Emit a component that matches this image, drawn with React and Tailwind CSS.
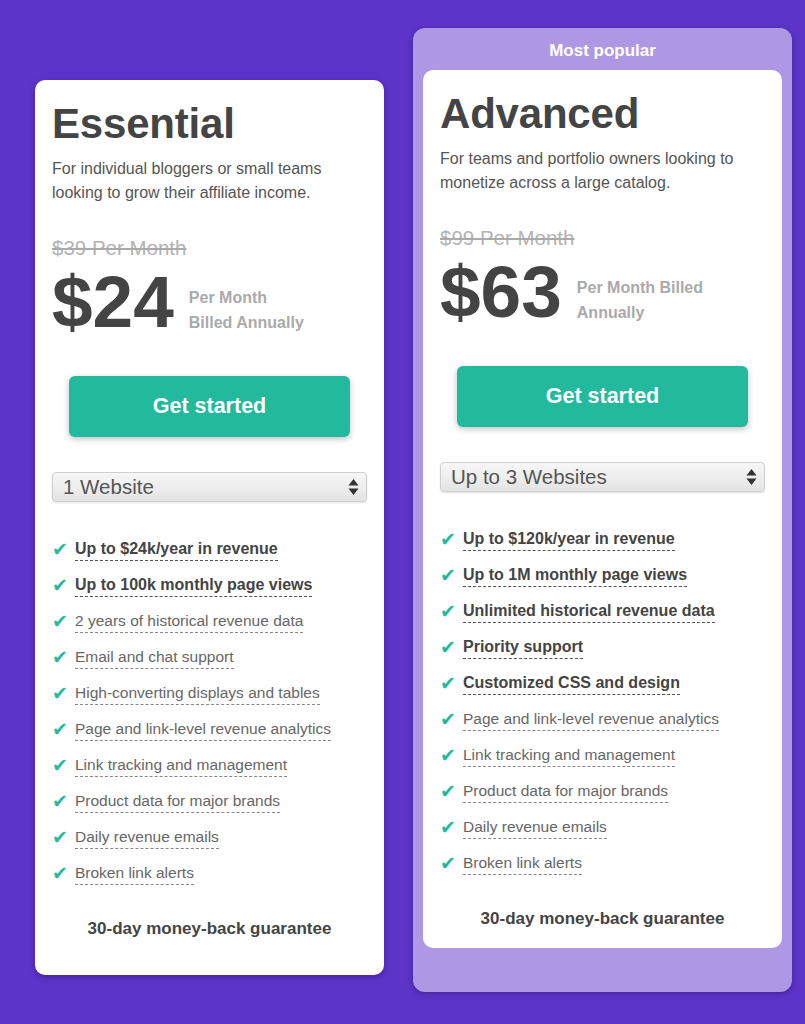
import { useState } from 'react';

const plans = [
  {
    name: 'Essential',
    desc: ['For individual bloggers or small teams', 'looking to grow their affiliate income.'],
    was: '$39 Per Month',
    price: '$24',
    note: ['Per Month', 'Billed Annually'],
    sites: '1 Website',
    features: [
      ['Up to $24k/year in revenue', true],
      ['Up to 100k monthly page views', true],
      ['2 years of historical revenue data', false],
      ['Email and chat support', false],
      ['High-converting displays and tables', false],
      ['Page and link-level revenue analytics', false],
      ['Link tracking and management', false],
      ['Product data for major brands', false],
      ['Daily revenue emails', false],
      ['Broken link alerts', false],
    ],
  },
  {
    name: 'Advanced',
    desc: ['For teams and portfolio owners looking to', 'monetize across a large catalog.'],
    was: '$99 Per Month',
    price: '$63',
    note: ['Per Month Billed', 'Annually'],
    sites: 'Up to 3 Websites',
    features: [
      ['Up to $120k/year in revenue', true],
      ['Up to 1M monthly page views', true],
      ['Unlimited historical revenue data', true],
      ['Priority support', true],
      ['Customized CSS and design', true],
      ['Page and link-level revenue analytics', false],
      ['Link tracking and management', false],
      ['Product data for major brands', false],
      ['Daily revenue emails', false],
      ['Broken link alerts', false],
    ],
  },
];

function SelectArrows() {
  return (
    <svg width="11" height="18" viewBox="0 0 11 18" className="shrink-0">
      <path d="M5.5 1 L10.5 7.5 H0.5 Z" fill="#333" />
      <path d="M5.5 17 L10.5 10.5 H0.5 Z" fill="#333" />
    </svg>
  );
}

function PlanCard({ plan, className }) {
  const [sites] = useState(plan.sites);

  return (
    <div className={`bg-white rounded-[10px] px-[17px] pt-[19px] ${className}`}>
      <h2 className="text-[42px] leading-[50px] font-bold text-[#444] tracking-[-0.2px]">{plan.name}</h2>
      <p className="mt-2 text-[16px] leading-[24px] text-[#555]">
        {plan.desc[0]}
        <br />
        {plan.desc[1]}
      </p>
      <div className="mt-[31px] text-[20.5px] leading-[24px] text-[#b3b3b3] line-through decoration-[#aaa]">{plan.was}</div>
      <div className="mt-[6px] flex items-start">
        <span className="text-[73px] leading-[72px] font-bold text-[#444]">{plan.price}</span>
        <span className="ml-[15px] mt-[19px] text-[16px] leading-[25px] font-bold text-[#aaa]">
          {plan.note[0]}
          <br />
          {plan.note[1]}
        </span>
      </div>
      <button className="mt-[38px] mx-[17px] w-[calc(100%-34px)] h-[61px] rounded-[6px] bg-[#22b99d] text-white text-[21.5px] font-bold shadow-[0_2px_6px_rgba(0,0,0,0.25)]">
        Get started
      </button>
      <div className="mt-[35px] h-[30px] flex items-center justify-between pl-[10px] pr-[7px] rounded-[4px] border border-[#cfcfcf] bg-linear-to-b from-[#f7f7f7] via-[#eeeeee] to-[#e3e3e3] shadow-[0_1px_2px_rgba(0,0,0,0.12)]">
        <span className="text-[20.5px] leading-none text-[#555]">{sites}</span>
        <SelectArrows />
      </div>
      <ul className="mt-[29px]">
        {plan.features.map(([text, bold]) => (
          <li key={text} className="h-[36px] flex items-center">
            <span className="w-[23px] text-[19px] text-[#22b99d] font-['DejaVu_Sans',sans-serif] leading-none">✔</span>
            <span
              className={`mt-[2px] leading-[18px] pb-[2px] border-b border-dashed ${
                bold ? 'text-[16px] font-bold text-[#444] border-[#555]' : 'text-[15.5px] text-[#666] border-[#888]'
              }`}
            >
              {text}
            </span>
          </li>
        ))}
      </ul>
      <div className="mt-[26px] text-center text-[17px] leading-[24px] font-bold text-[#444]">30-day money-back guarantee</div>
    </div>
  );
}

export default function App() {
  return (
    <div className="min-h-[1024px] bg-[#5c35c8] font-['Liberation_Sans',Arial,sans-serif] flex items-start pl-[35px] gap-[29px]">
      <PlanCard plan={plans[0]} className="mt-[80px] w-[349px] h-[895px] shadow-[0_2px_6px_rgba(40,10,120,0.45)]" />
      <div className="mt-[28px] w-[379px] h-[964px] rounded-[12px] bg-[#af98e3] px-[10px] shadow-[0_2px_6px_rgba(40,10,120,0.45)]">
        <div className="h-[42px] pt-[3px] flex items-center justify-center text-white font-bold text-[17px]">Most popular</div>
        <PlanCard plan={plans[1]} className="h-[878px]" />
      </div>
    </div>
  );
}
